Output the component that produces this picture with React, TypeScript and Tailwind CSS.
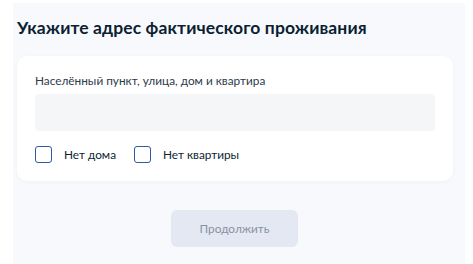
export default function App() {
  return (
    <div className="w-[473px] h-[264px] bg-white pt-[3px] pl-[13px] overflow-hidden" style={{ fontFamily: "Lato, 'Noto Sans', sans-serif" }}>
      <div className="w-[452px] h-[261px] bg-[#f8f9fc] pl-[4px] pt-[13px]">
        <h1 className="text-[17.5px] font-bold text-[#0b1f33] leading-[24px] tracking-[0.1px]">Укажите адрес фактического проживания</h1>
        <div className="mt-[16px] w-[436px] h-[125px] bg-white rounded-[10px] shadow-[0_1px_4px_rgba(0,0,0,0.03)] pl-[18px] pr-[18px] pt-[18px]">
          <div className="text-[11.8px] text-[#2c3a4a] leading-[14px]">Населённый пункт, улица, дом и квартира</div>
          <div className="mt-[6px] h-[37px] w-[400px] bg-[#f5f6f8] rounded-[4px]" />
          <div className="mt-[15px] flex items-center">
            <div className="w-[17px] h-[17px] border-[1.5px] border-[#2d5ba6] rounded-[3px]" />
            <span className="ml-[12px] text-[11.8px] text-[#0b1f33]">Нет дома</span>
            <div className="ml-[18px] w-[17px] h-[17px] border-[1.5px] border-[#2d5ba6] rounded-[3px]" />
            <span className="ml-[12px] text-[11.8px] text-[#0b1f33]">Нет квартиры</span>
          </div>
        </div>
        <div className="mt-[29px] ml-[154px] w-[127px] h-[37px] bg-[#e4e8f2] rounded-[6px] flex items-center justify-center text-[11.8px] text-[#8592a4]">Продолжить</div>
      </div>
    </div>
  );
}
